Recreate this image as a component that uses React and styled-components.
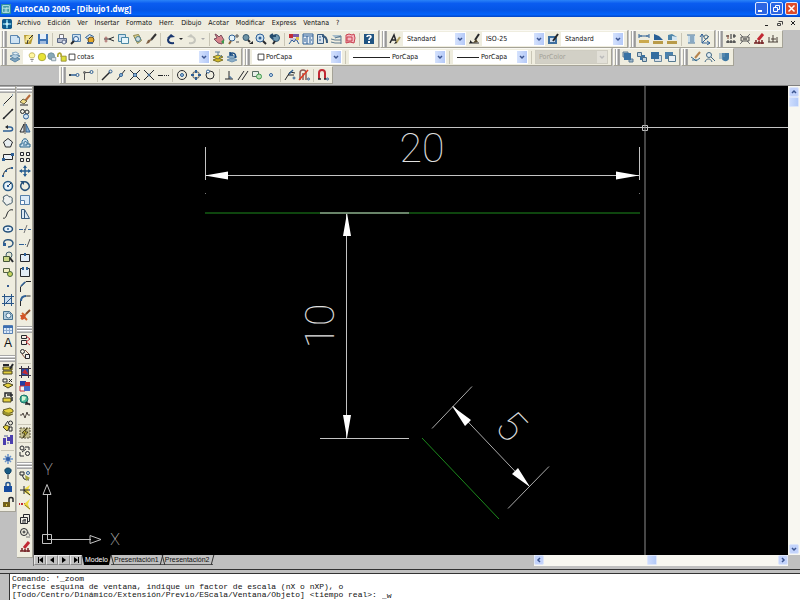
import React, { useState } from 'react';
import styled, { createGlobalStyle, css } from 'styled-components';

const ink = '#26282c';
const blue = '#2f6096';
const pale = '#cfe3f3';
const gold = '#e3cf3c';
const red = '#c22a34';
const green = '#3c9a4c';

// every icon is drawn on a 12 x 12 grid
const icons = {
  app: <><rect width="12" height="12" fill="#2f8f9e" /><path d="M2 2h8v8H2zM2 5h8M5 5v5M7 4v6" stroke="#d6f4f5" /></>,
  menu: <><rect width="12" height="12" rx="2" fill="#10598c" /><path d="M6 1v10M1 6h10" stroke="#7fd4ee" strokeWidth="2" /><path d="M6 4v4M4 6h4" stroke="#fff" /></>,
  newFile: <><path d="M1.5 2.5h7l2 2v6h-9z" fill={pale} stroke="#5b86b0" /><path d="M8.500 2.500v2h2" stroke="#5b86b0" /></>,
  open: <><path d="M1 2h8l1 2-2 7H2z" fill="#b79b34" /><path d="M3 3l5-1 1 3-4 5-3-1z" fill="#f3e493" /><path d="M6 6l4-4M4 11l1-4" stroke={ink} /></>,
  save: <><path d="M1 1h10v10H1z" fill="#3f74b4" /><path d="M3 1h6v5H3z" fill="#e6f0fa" /><path d="M3 8h6v3H3z" fill="#9fbbe0" /></>,
  plot: <><path d="M3.500 1.500h4v4h-4z" fill="#f7f7ff" stroke="#777" /><path d="M1.500 5.500h9v4h-9z" fill="#b6bdce" stroke="#596685" /><circle cx="8" cy="9" r="2" fill="#e5ebf5" stroke="#596685" /></>,
  preview: <><path d="M2.500 1.500h8v7h-8z" fill={pale} stroke="#5b86b0" /><circle cx="6" cy="6" r="2.500" fill="#edf5ff" stroke={blue} /><path d="M4 8l-3 3" stroke={ink} strokeWidth="2" /></>,
  publish: <><path d="M1.500 4.500l4-3 4 2-3 4z" fill={pale} stroke={blue} /><circle cx="7" cy="7" r="3" fill="#e3a92b" stroke="#70521c" /><path d="M3 9h6v2H3z" fill="#4a688e" /></>,
  cut: <><path d="M1 6h5l5-2M6 6l5 2" stroke={ink} /><circle cx="3" cy="5" r="1" stroke="#a66" /><circle cx="3" cy="8" r="1" stroke="#a66" /></>,
  copyClip: <><path d="M1.500 1.500h7v7h-7z" fill={pale} stroke="#4c88a4" /><path d="M4.500 4.500h7v6h-7z" fill="#e7f6fb" stroke="#4c88a4" /></>,
  paste: <><path d="M2.500 2.500l5-1 3 6-4 3z" fill="#e3d48c" stroke="#8b8650" /><circle cx="7" cy="6" r="2.500" fill="#cfe0e6" stroke="#4f7d8a" /></>,
  brush: <><path d="M11 1L6 7" stroke="#333" strokeWidth="2" /><path d="M7 6l-3 4-3 1 2-4z" fill="#816246" /></>,
  undo: <><path d="M9 10C2 11 2 6 5 4" stroke="#18366e" strokeWidth="2" transform="translate(1 0)" /><path d="M3 5l4-4 4 3z" fill="#18366e" /></>,
  redo: <><path d="M3 10c7 1 7-4 4-6" stroke="#c6c6bd" strokeWidth="2" /><path d="M9 5L5 1 1 4z" fill="#c6c6bd" /></>,
  more: <path d="M4 5h4L6 7z" fill={ink} />,
  moreOff: <path d="M4 5h4L6 7z" fill="#aaa" />,
  pan: <><path d="M2 1l2 4-3 1 4 4 4 1 2-4-3-5-2 2-2-2z" fill="#d7848c" stroke="#7b4e5e" /><path d="M8 9l3-3v5z" fill={green} /></>,
  zoomRt: <><circle cx="5" cy="5" r="3" fill="#e4f2f8" stroke={blue} /><path d="M4 8l-2 3" stroke="#8b6638" strokeWidth="2" /><path d="M8 3h4M10 1v4M9 9h3" stroke="#555" /></>,
  zoomWin: <><circle cx="5" cy="4.500" r="3" fill="#6e94a7" stroke="#375a70" /><path d="M7 7l2 2" stroke={ink} strokeWidth="2" /><path d="M8 11h4V8z" fill={ink} /></>,
  zoomAll: <><circle cx="5" cy="5" r="4" fill="#cbe0ee" stroke={blue} /><circle cx="5" cy="5" r="1.500" fill={blue} /><path d="M8 8l3 3" stroke={ink} strokeWidth="2" /></>,
  zoomPrev: <><circle cx="7" cy="5" r="3.500" fill="#6f99b3" stroke="#315a78" /><path d="M1 3h6M1 3l3-2M1 3l3 3" stroke="#244b6d" strokeWidth="2" /><path d="M6 8l-2 3" stroke={ink} strokeWidth="2" /></>,
  props: <><path d="M1 1h4v4H1z" fill={red} /><path d="M5 1h6v3H5z" fill="#7a5aa5" /><path d="M2 5h8v3H2z" fill="#c9c3d8" /><path d="M1 11l3-4 2 2 2-3 3 5" stroke={blue} /><path d="M8 4h3v3H8z" fill="#e0c14b" /></>,
  design: <><path d="M1 1h10v10H1z" fill="#e8f0f8" stroke={blue} /><path d="M1 3h10M5 3v8" stroke={blue} /><path d="M7 5h2M7 7h3M7 9h2M3 5v4" stroke={blue} /></>,
  palette: <><path d="M1.500 1.500h6v9h-6z" fill="#d5e1ec" stroke="#35597c" /><path d="M3 4h2M3 7h2" stroke={blue} /><path d="M6 3c4 0 5 3 5 7" stroke="#35597c" strokeWidth="2" /></>,
  sheets: <><path d="M2 2h9v3H5z" fill="#a5bccb" /><path d="M1 6l4 1h6M1 9l4 1h6M5 5l6-2v8" stroke="#5f7b8e" /></>,
  markup: <><path d="M2 2l3-1 3 1 2-1 1 4-1 5-4-1-4 1z" fill="#f5b9c2" stroke="#c8404f" /><path d="M3 4h5v4H3z" stroke="#c8404f" /></>,
  help: <><path d="M1 1h10v10H1z" fill="#205482" /><path d="M4 4c0-2 4-2 4 0 0 1-2 1-2 3" stroke="#fff" strokeWidth="1.500" /><path d="M5 8h2v2H5z" fill="#fff" /></>,
  textStyle: <><path d="M1 10L5 2l2 6M3 7h4" stroke={ink} strokeWidth="1.500" /><path d="M11 4L7 10" stroke="#b2a05b" strokeWidth="2" /><path d="M7 8l-2 3 3-1z" fill={ink} /></>,
  dimStyle: <><path d="M1 10h10" stroke={ink} /><path d="M2 10v-3l3 3" fill={ink} /><path d="M11 1L7 7" stroke={ink} strokeWidth="2" /><path d="M8 6L5 10l5-1z" fill="#514529" /></>,
  tableStyle: <><path d="M1 3h9v8H1z" fill="#3d6f9f" /><path d="M3 5h5v4H3z" fill="#cfdef0" /><path d="M11 1L6 8" stroke={ink} strokeWidth="2" /></>,
  dist: <><path d="M1 3h10M1 1v4M11 1v4M3 2v2M9 2v2" stroke={blue} /><path d="M1 7h10v3H1z" fill="#cba94d" /></>,
  area: <><path d="M2 7V1l5 2 4 4z" fill="#285f96" /><path d="M1 8h10v3H1z" fill="#b99b49" /></>,
  mass: <><path d="M2 7V2l4-1 5 3v3z" fill="#4f86aa" /><path d="M6 3l5 1v3H6z" fill="#d4e6f1" /><path d="M1 8h10v3H1z" fill="#b99b49" /></>,
  list: <><path d="M3 2h7v8H3z" fill="#c5dbea" /><path d="M2 2h8M5 4h4M5 6h4M5 8h4M3 10h7" stroke="#51799a" /></>,
  locate: <><path d="M3 1v9h8M3 10l7-7" stroke={blue} /><path d="M1 4l2-3 2 3M8 8l3 2-3 2" stroke={blue} /><circle cx="7" cy="4" r="2" stroke="#507083" /></>,
  exA: <><path d="M1 3h3M6 1v5M8 3h3M1 9h10M3 7v3M6 7v3M9 7v3M9 1v4" stroke={ink} /><path d="M3 2v4" stroke="#8a4a38" /></>,
  exB: <><path d="M1 1l10 10M11 1L1 11" stroke="#777" /><path d="M2 4h8v4H2z" fill="#d8d5c8" stroke="#555" /><path d="M4 6h4" stroke={ink} /></>,
  exC: <><path d="M10 1L5 7" stroke={red} strokeWidth="3" /><path d="M1 10h10M3 7v3M6 8v3M9 7v4" stroke="#752426" strokeWidth="1.500" /></>,
  exD: <path d="M1 9h10M2 4v5M6 2v7M10 4v5M4 6h5" stroke="#4a4038" />,
  layers: <><path d="M1 8l5-2 5 2-5 3z" fill="#7da3bf" stroke="#5e87a6" /><path d="M1 5l5-2 5 2-5 3z" fill="#b8d2e2" stroke="#5e87a6" /><path d="M3 2l4-1 3 2-4 1z" fill="#e3eef5" stroke="#89abc2" /></>,
  bulb: <><path d="M6 1c4 0 4 4 2 6H4C2 5 2 1 6 1z" fill="#fff7a0" stroke="#b9a94a" /><path d="M4 9h4M5 11h2" stroke="#777" /></>,
  sun: <circle cx="6" cy="6" r="4.500" fill="#e8e337" stroke="#a5a22e" />,
  vpFreeze: <><circle cx="5" cy="5" r="4" fill="#87a9b8" stroke="#6a8b9c" /><path d="M5.500 6.500h5v4h-5z" fill="#d6e2e8" stroke="#7d929d" /></>,
  unlock: <><path d="M5 5h6v6H5z" fill="#dde03a" stroke="#8d832d" /><path d="M5 6V4C5 0 1 1 1 4v2" stroke="#b0a631" strokeWidth="2" /></>,
  swatch: <path d="M2.500 2.500h7v7h-7z" fill="#fff" stroke="#222" />,
  makeLayer: <><path d="M1 9l5-2 5 2-5 2z" fill="#d5bb28" stroke="#807629" /><path d="M1 6l5-2 5 2-5 2z" fill={gold} stroke="#807629" /><path d="M3 1h5M6 1v4M10 4L7 7" stroke="#5a7e98" /></>,
  layerPrev: <><path d="M1 9l5-2 5 2-5 2zM1 6l5-2 5 2-5 2z" fill="#8baec7" stroke="#7296b3" /><path d="M9 7c2-5-3-6-5-4M4 1v3h3" stroke="#174b82" strokeWidth="1.500" /></>,
  front: <><path d="M1 1h5v5H1zM7 8h4v3H7z" fill="#9eb6c7" stroke="#5a7b94" /><rect x="2" y="2" width="7" height="7" fill="#3972a4" /></>,
  back: <><rect x="4" y="4" width="5" height="5" fill="#3972a4" /><path d="M1.500 1.500h4v4h-4zM6.500 6.500h4v4h-4z" fill="#c1d2de" stroke="#4a6d88" /></>,
  above: <><path d="M4.500 4.500h7v6h-7z" fill="#d6dfe7" stroke="#68869c" /><rect x="1" y="1" width="8" height="7" fill="#356d9f" /></>,
  below: <><rect x="1" y="1" width="8" height="7" fill="#4b81ad" /><path d="M4.500 4.500h7v6h-7z" fill="#e9eff5" stroke="#55798f" /></>,
  refEdit: <><path d="M10 1L5 7" stroke="#b5834d" strokeWidth="2" /><path d="M1 6l3 2 2 2 4-3M2 9h5" stroke="#366b90" /></>,
  refUser: <><circle cx="5" cy="4" r="2.500" fill="#e2edf3" stroke="#426782" /><path d="M1 11c1-4 6-4 7 0M7 6l4 4" stroke="#426782" /></>,
  refSave: <><path d="M4 2h7v5c0 4-6 4-7 1z" fill="#3f78a4" /><path d="M1 3h6M1 5h6M1 7h4" stroke="#6a97b7" /></>,
  track: <><path d="M1 6h7" stroke={blue} strokeWidth="1.500" /><circle cx="2" cy="6" r="1" fill={ink} /><circle cx="9.500" cy="6" r="1.500" stroke={blue} /></>,
  from: <><path d="M2.500 11V3.500H8" stroke="#555" /><circle cx="2.500" cy="3.500" r="1" stroke="#555" /><circle cx="9.500" cy="3" r="1.500" stroke={blue} /></>,
  endpoint: <><path d="M1 11l8-8" stroke={ink} strokeWidth="1.500" /><circle cx="9.500" cy="2.500" r="1.500" stroke={blue} /></>,
  midpoint: <><path d="M2 11l8-10" stroke={ink} /><circle cx="6" cy="6" r="1.500" fill="#9fc4e2" stroke={blue} /></>,
  intersect: <><path d="M1 1l10 10M11 1L1 11" stroke={ink} /><circle cx="6" cy="6" r="1.500" fill="#9fc4e2" stroke={blue} /></>,
  apparent: <><path d="M1 1l10 10M11 1L7 5M5 7l-4 4" stroke={ink} /><circle cx="6" cy="6" r="1" stroke={blue} /></>,
  extension: <path d="M1 6.500h5M7 6.500h1M9 6.500h1M11 6.500h1" stroke={ink} />,
  center: <><circle cx="6" cy="6" r="4.500" stroke={ink} /><circle cx="6" cy="6" r="1.500" fill="#9fc4e2" stroke={blue} /></>,
  quadrant: <><circle cx="6" cy="6" r="3.500" stroke="#555" /><path d="M6 1v3M6 8v3M1 6h3M8 6h3" stroke={blue} strokeWidth="2" /></>,
  tangent: <><circle cx="6" cy="6" r="4" stroke={ink} /><circle cx="4" cy="2.500" r="1.500" fill="#fff" stroke={blue} /></>,
  perp: <><path d="M6 2v8M2 10h8" stroke={ink} /><path d="M6 8h2v2" stroke={blue} /></>,
  parallel: <path d="M1 11l6-9M5 11l6-9" stroke={ink} />,
  insertion: <><path d="M1.500 2.500h6v5h-6z" fill="#e7efe7" stroke="#596d63" /><circle cx="8" cy="7.500" r="2.500" fill="#bfe0b8" stroke={green} /></>,
  node: <circle cx="6" cy="6" r="1.500" fill="#d8edfb" stroke={blue} />,
  nearest: <><path d="M1 11L6 3l5 1M4 6h6" stroke={ink} /><path d="M5 5l4-4" stroke={blue} strokeWidth="1.500" /><circle cx="10" cy="9" r="1" stroke={blue} /></>,
  noSnap: <><path d="M2 11V4c0-4 6-4 6 0v7M5 11V4" stroke="#8c5d58" strokeWidth="1.500" /><path d="M1 11L10 1" stroke="#e13922" strokeWidth="1.500" /><circle cx="10.500" cy="10" r="1" stroke={blue} /></>,
  magnet: <><path d="M2 10V4c0-4 6-4 6 0v6" stroke={red} strokeWidth="2" /><path d="M1 10h3M7 10h2" stroke={ink} strokeWidth="1.500" /><circle cx="10.500" cy="10" r="1" stroke={blue} /></>,
  line: <><path d="M2 10l8-8" stroke={ink} /><path d="M1 11h1M10 1h1" stroke={blue} /></>,
  xline: <><path d="M1 11L11 1" stroke={ink} strokeWidth="1.500" /><path d="M1 9v2h2zM9 1h2v2z" fill={ink} /></>,
  pline: <><path d="M1 9h7c4 0 3-4 0-4H5" stroke={blue} strokeWidth="1.500" /><path d="M3 5l3-2v4z" fill={ink} /></>,
  polygon: <path d="M6 1.500l4.500 3.500-2 5h-5l-2-5z" fill="#e7edf0" stroke={ink} />,
  rect: <><path d="M1.500 3.500h9v5h-9z" fill="#eaf0f5" stroke={ink} /><path d="M0 7h3v3H0zM9 2h3v3H9z" fill={blue} /></>,
  arc: <><path d="M1 11c1-5 4-8 9-8" stroke={ink} /><path d="M0 10h2v2H0zM9 2h2v2H9zM3 5h2v2H3z" fill={blue} /></>,
  circle: <><circle cx="6" cy="6" r="4.500" fill="#e8f2f8" stroke="#285b86" strokeWidth="1.500" /><path d="M6 6l3-3" stroke={ink} /><path d="M5 5h2v2H5z" fill={blue} /></>,
  cloud: <path d="M3 2c2-2 4 0 4 1 2-1 4 1 3 3 1 3-1 4-3 4-2 2-4 1-4-1-3-1-2-3-1-4-1-1-1-3 1-3z" fill="#edf0ee" stroke="#334c5c" />,
  spline: <path d="M1 10c2 1 3-1 4-4s3-5 6-4" stroke={ink} />,
  ellipse: <><ellipse cx="6" cy="6" rx="4.500" ry="3" fill="#e6f2fb" stroke="#244f78" strokeWidth="1.500" /><circle cx="6" cy="6" r="1" fill={blue} /></>,
  ellipseArc: <><path d="M2 7C0 2 10 1 11 6c0 3-3 4-5 4" stroke="#315a80" strokeWidth="1.500" /><path d="M1 6h3v3H1z" fill={blue} /></>,
  insert: <><circle cx="7" cy="4" r="3" fill="#e3e6d2" stroke="#3e5c6c" /><path d="M1.500 5.500h6v5h-6z" fill="#cbd685" stroke="#445737" /><path d="M8 7l3 4" stroke={ink} strokeWidth="2" /></>,
  block: <><path d="M1.500 2.500h6v4h-6z" fill="#f0edbd" stroke="#515f42" /><circle cx="8" cy="8" r="2.500" fill="#c8d35d" stroke="#45663e" /></>,
  point: <rect x="5" y="5" width="2" height="2" fill="#365b90" />,
  hatch: <><path d="M2.500 2.500h7v7h-7z" fill="#c9dced" stroke={blue} /><path d="M4 9l5-5M0 2.500h12M0 9.500h12M2.500 0v12M9.500 0v12" stroke="#2a5687" /></>,
  region: <><path d="M1.500 2.500h6l3 3v5h-9z" fill="#b6cfdf" stroke="#46718f" /><circle cx="6.500" cy="6.500" r="2.500" fill="#edf4f8" stroke="#46718f" /></>,
  table: <><path d="M1.500 2.500h9v8h-9z" fill="#dbe9f8" stroke="#567eb1" /><path d="M1 3h10v2H1z" fill="#3d6fb0" /><path d="M4.500 5v5M7.500 5v5M2 7.500h8" stroke="#8dacd0" /></>,
  erase: <><path d="M11 1L6 7" stroke="#b66a3b" strokeWidth="2" /><path d="M1 8l3-3 4 2-3 3z" fill="#efdc87" stroke="#6e6444" /><path d="M1 11h8" stroke={ink} /></>,
  copy: <><circle cx="3.500" cy="3.500" r="2" stroke={ink} /><circle cx="8" cy="4" r="2" stroke={ink} /><circle cx="7" cy="8.500" r="2.500" fill="#d3e4f1" stroke={blue} /></>,
  mirror: <><path d="M5 2v8H1z" fill="#e7eaec" stroke={ink} /><path d="M7 2v8h4z" fill="#86aed0" stroke={blue} /><path d="M6 0v12" stroke="#555" /></>,
  offset: <><path d="M1 10h10V7H9c1-7-7-7-6 0H1z" fill="#c8deec" stroke="#27628b" /><path d="M4 8h4c1-5-4-4-3-1" stroke="#27628b" /></>,
  array: <path d="M1.500 1.500h3v3h-3zM7.500 1.500h3v3h-3zM1.500 7.500h3v3h-3zM7.500 7.500h3v3h-3z" fill="#f4f4ef" stroke={ink} />,
  move: <><path d="M6 1v10M1 6h10" stroke="#285d90" strokeWidth="1.500" /><path d="M6 0l2 3H4zM6 12l2-3H4zM0 6l3-2v4zM12 6L9 4v4z" fill="#285d90" /></>,
  rotate: <><path d="M3 3c4-4 10 3 6 6-4 4-10-2-6-6" stroke="#244f78" strokeWidth="1.500" /><path d="M1 1h4v4z" fill="#244f78" /></>,
  scale: <><path d="M1.500 1.500h9v9h-9z" fill="#dcebf7" stroke="#557fa9" /><path d="M1.500 6.500h4v4h-4z" fill="#fff" stroke="#557fa9" /></>,
  stretch: <><path d="M2.500 1.500h3l5 9h-8z" fill="#dce9f1" stroke="#34597c" /><path d="M5.500 2v8" stroke="#34597c" /></>,
  trim: <><path d="M0 6.500h4M5 6.500h2M9 6.500h3" stroke={blue} /><path d="M8 2L5 10" stroke="#777" /></>,
  extend: <><path d="M0 7.500h5M6 7.500h1" stroke={blue} /><path d="M11 2L8 10" stroke="#555" /></>,
  breakAt: <><path d="M1.500 3.500h9v7h-9z" fill="#e3edf5" stroke={ink} /><path d="M5 2h2v3H5z" fill={blue} /></>,
  break: <><path d="M4 2.500H1.500v8h9v-8H8" fill="#e3edf5" stroke={ink} /><path d="M3 1h2v3H3zM7 1h2v3H7z" fill={blue} /></>,
  chamfer: <><path d="M1.500 12V7L7 1.500h5" stroke={ink} /><path d="M2 6l4-4" stroke={blue} strokeWidth="1.500" /></>,
  fillet: <><path d="M1.500 12V8c0-4 3-6 6-6h4" stroke={ink} /><path d="M2 7c0-3 2-5 5-5" stroke={blue} strokeWidth="2" /></>,
  explode: <><path d="M2 10l5-5M3 4l2 2M6 9l2 2" stroke="#d3622b" strokeWidth="2" /><path d="M11 1L7 5" stroke="#8b4a23" strokeWidth="2" /><path d="M1 6l5 0 1 3-4 2z" fill="#d2542a" /></>,
  insertRef: <><path d="M2.500 1.500h5v3h-5zM2.500 6.500h5v4h-5z" fill="#f4eee4" stroke={ink} /><path d="M7 2l4 3-4 3 4 3" stroke={red} /></>,
  attach: <><circle cx="3.500" cy="3.500" r="2" stroke={ink} /><path d="M6 2l5 5M3 6l4 5" stroke="#7b4a3a" /><path d="M6.500 6.500h4v4h-4z" fill="#eee" stroke={ink} /></>,
  image: <><rect x="2" y="2" width="8" height="8" fill="#284aa5" /><path d="M3 7l3-4 4 6z" fill={red} /><path d="M0 2.500h12M0 9.500h12M2.500 0v12M9.500 0v12" stroke="#3b3346" /></>,
  imageAdj: <><path d="M1 1h6v5H1z" fill="#263ea4" /><path d="M6 2h5v4H6z" fill={red} /><path d="M1 6h5v5H1z" fill="#f4f4f4" stroke={red} /><path d="M5 6h6v5H5z" fill="#4268c9" /></>,
  globe: <><circle cx="5" cy="5" r="4" fill="#49b596" stroke="#186f69" /><path d="M3 2l4 1-1 3-3 1z" fill="#d6f4d4" /><path d="M7 8l4 3M6 10h5" stroke={ink} strokeWidth="1.500" /></>,
  wave: <path d="M1 6h2l1-2 2 5 2-6 1 3h2" stroke="#4d453f" />,
  flash: <><path d="M1 1h10v10H1z" fill="#c4bf8f" stroke="#5a5540" strokeDasharray="2 1" /><path d="M8 1L3 6h3l-2 5 5-6H6z" fill="#f0dc3b" stroke="#46401e" /></>,
  chain: <><circle cx="3" cy="3" r="2" stroke={ink} /><circle cx="8.500" cy="8.500" r="2" stroke={ink} /><path d="M6 2h4v3M1 7v4h4M3 7l4-3" stroke={ink} /></>,
  layA: <><path d="M1 4h9v3H1zM1 8h9v3H1z" fill={gold} stroke="#47431f" /><path d="M1 2h6M8 6l3-5" stroke={ink} strokeWidth="2" /></>,
  layB: <><path d="M1 8l5-2 5 2-5 3z" fill={gold} stroke="#47431f" /><path d="M1 2h4v3H1zM7 2l3 3M10 2L7 5" stroke={ink} /></>,
  layC: <><path d="M1 7h8v4H1z" fill={gold} stroke="#47431f" /><path d="M3 6V2h6v4M5 4h6M10 6v4" stroke={ink} strokeWidth="1.500" /></>,
  layD: <><path d="M1 4l7-2 3 2v2L5 8z" fill={gold} stroke="#655d24" /><path d="M1 5v3l5 2 5-2" fill="#9b942e" stroke="#655d24" /></>,
  layE: <><path d="M1 7l3-2 4 2-3 4z" fill={gold} stroke="#47431f" /><circle cx="8.500" cy="3" r="2" stroke={ink} /><path d="M3 5l3-4M7 7h3v4H7z" stroke={ink} /></>,
  layF: <><path d="M1 4h3v7H1zM5 3h3v4H5zM8 1h3v9H8z" fill="#4b3fae" /><path d="M2 2h4M5 9h2" stroke="#9ba2bb" strokeWidth="2" /></>,
  freeze: <><path d="M6 1v10M1 6h10M3 3l6 6M9 3L3 9" stroke="#6a93c8" strokeWidth="1.500" /><circle cx="6" cy="6" r="2" fill="#315ea6" /></>,
  bulbOff: <><path d="M6 1c4 0 4 4 1 6H5C2 5 2 1 6 1z" fill="#175b83" stroke="#0d3e63" /><path d="M5 9h2M5 11h2" stroke={ink} /></>,
  lock: <><path d="M2 5h8v6H2z" fill="#174c9e" /><path d="M4 5V3c0-2 4-2 4 0v2" stroke="#23548f" strokeWidth="1.500" /></>,
  lockOpen: <><path d="M1 6h7v5H1z" fill="#72601d" /><path d="M7 6V3c0-2 4-2 4 0v3" stroke={ink} strokeWidth="1.500" /><path d="M4 8h1v2H4z" fill={gold} /></>,
  toolA: <><path d="M1 2h4v3H1zM3 5l2 4 5 1" stroke={ink} /><path d="M6 5l5 3-4 3z" fill="#a3a13a" /><circle cx="9" cy="3" r="1.500" stroke={blue} /></>,
  toolB: <><path d="M5 5l6-4-2 5 3 6-7-4z" fill="#f0db40" /><path d="M1 6h10M5 6l6 5M5 2v8" stroke={ink} /></>,
  toolC: <><path d="M0 6h1M2 6h2M5 6h1" stroke={red} strokeWidth="2" /><path d="M5 6l6-5-2 5 2 6-6-5z" fill="#f0db40" /><path d="M6 7l5 4" stroke="#8b7a2c" /></>,
  toolD: <><path d="M1.500 4.500h7v6h-7zM4.500 4V1.500h6v7H9" fill="#efeee5" stroke={ink} /><path d="M4 7v4M6 6v4M4 7h3" stroke={ink} /></>,
  toolE: <><circle cx="5" cy="5" r="3.500" stroke={ink} /><circle cx="5" cy="5" r="1" stroke={ink} /><path d="M8 3l3 6M7 10h4" stroke="#777" /></>,
};

const Icon = ({ name, size = 12 }) => (
  <svg width={size} height={size} viewBox="0 0 12 12" fill="none" aria-hidden="true">
    {icons[name]}
  </svg>
);

const GlobalStyle = createGlobalStyle`
  * {
    box-sizing: border-box;
  }
  body {
    margin: 0;
    overflow: hidden;
    background: #c0c0c0;
    font-family: 'DejaVu Sans Condensed', 'Liberation Sans', sans-serif;
    font-size: 7px;
    color: #111;
  }
  button, select, input {
    font: inherit;
    color: inherit;
    margin: 0;
    padding: 0;
    border: 0;
    border-radius: 0;
    background: none;
  }
  svg {
    display: block;
    flex: none;
  }
`;

const Shell = styled.div`
  display: flex;
  flex-direction: column;
  height: 100vh;
`;

const TitleBar = styled.header`
  display: flex;
  align-items: center;
  gap: 3px;
  height: 17px;
  padding: 0 2px 0 1px;
  background: linear-gradient(#2a83f8 0, #0a5cf0 20%, #0455e6 60%, #0362fa 85%, #0345c4 100%);
`;

const Title = styled.h1`
  flex: 1;
  margin: 0;
  font-family: 'Open Sans', 'Noto Sans', sans-serif;
  font-size: 8px;
  font-weight: 700;
  color: #fff;
`;

const WindowButton = styled.button`
  display: flex;
  align-items: center;
  justify-content: center;
  width: 13px;
  height: 13px;
  margin-left: -1px;
  border: 1px solid #dfe9ff;
  border-radius: 2px;
  background: ${({ $close }) => ($close ? '#dd4c2a' : '#2c65e2')};
`;

const MenuBar = styled.nav`
  display: flex;
  align-items: center;
  gap: 7px;
  height: 13px;
  padding: 0 4px 0 2px;
  background: #efecdf;

  > svg {
    margin-right: -2px;
  }
`;

const MenuItem = styled.button`
  line-height: 11px;
`;

const Spacer = styled.div`
  flex: ${({ $grow = 1 }) => $grow};
`;

const Dock = styled.div`
  padding-bottom: 1px;
  background: #c0c0c0;
  border-bottom: 1px solid #808080;
`;

const DockRow = styled.div`
  display: flex;
  gap: 1px;
  height: 18px;
  padding-left: ${({ $indent }) => ($indent ? '59px' : '0')};
`;

const Bar = styled.div`
  display: flex;
  align-items: center;
  padding: 0 2px 0 1px;
  background: #efeddf;
  border: 1px solid;
  border-color: #faf9f4 #a5a397 #a5a397 #faf9f4;
`;

const Grip = styled.div`
  flex: none;
  ${({ $flat }) => $flat ? css`
    height: 7px;
    margin-top: 4px;
    border: solid #a8a8a8;
    border-width: 1px 0;
    background: linear-gradient(#fff 0 1px, #c8c8c8 1px 2px, #999 2px 3px, #fff 3px 4px, #c8c8c8 4px);

    &:first-child {
      margin-top: 0;
    }
  ` : css`
    width: 5px;
    height: 16px;
    margin-right: 1px;
    border: solid #a8a8a8;
    border-width: 0 1px;
    background: linear-gradient(90deg, #fff 0 1px, #c8c8c8 1px 2px, #999 2px 3px);
  `}
`;

const Divider = styled.div`
  flex: none;
  ${({ $flat }) => $flat ? css`
    height: 1px;
    margin: 2px 1px 1px;
  ` : css`
    width: 1px;
    height: 13px;
    margin: 0 2px;
  `}
  background: #c9c6b6;
`;

const Tool = styled.button`
  display: flex;
  flex: none;
  align-items: center;
  justify-content: center;
  width: ${({ $narrow }) => ($narrow ? '8px' : '14px')};
  height: 14px;
`;

const Combo = styled.label`
  position: relative;
  display: flex;
  align-items: center;
  width: ${({ $w }) => $w}px;
  height: 14px;
  padding-left: 3px;
  margin: 0 1px;
  border: 1px solid ${({ $off }) => ($off ? '#cfcdc2' : '#fff')};
  background: ${({ $off }) => ($off ? '#d2d0c6' : '#fff')};
  color: ${({ $off }) => ($off ? '#a2a096' : '#111')};

  select {
    flex: 1;
    min-width: 0;
    height: 12px;
    padding-right: 10px;
    appearance: none;
    opacity: 1;
  }
`;

const ComboArrow = styled.span`
  position: absolute;
  right: 0;
  top: 0;
  display: flex;
  align-items: center;
  justify-content: center;
  width: 10px;
  height: 12px;
  pointer-events: none;
  background: ${({ $off }) => ($off ? '#e2e0d8' : 'linear-gradient(90deg, #d5e2fd, #b4c9f8)')};
`;

const Sample = styled.span`
  width: ${({ $w }) => $w}px;
  height: 1px;
  margin-right: 2px;
  background: #222;
`;

const Work = styled.main`
  display: flex;
  flex: 1;
  min-height: 0;
`;

const Palettes = styled.div`
  display: flex;
  align-items: flex-start;
  gap: 1px;
  width: 33px;
`;

const Palette = styled.div`
  display: flex;
  flex-direction: column;
  flex: 1;
  padding-bottom: 2px;
  background: #efeddf;
  border-right: 1px solid #a5a397;
  border-bottom: 1px solid #a5a397;
`;

const Group = styled.div`
  display: flex;
  flex-direction: column;
  align-items: center;

  /* icons sit on a pitch of 43px for every three */
  ${Tool}:nth-child(3n) {
    margin-bottom: 1px;
  }
`;

const View = styled.section`
  display: flex;
  flex: 1;
  flex-direction: column;
  min-width: 0;
  border-left: 1px solid #777;
`;

const ViewTop = styled.div`
  display: flex;
  flex: 1;
  min-height: 0;
`;

const Canvas = styled.div`
  flex: 1;
  min-width: 0;
  overflow: hidden;
  background: #000;

  svg {
    width: 100%;
    height: 100%;
  }
`;

const ScrollBar = styled.div`
  display: flex;
  flex-direction: ${({ $vertical }) => ($vertical ? 'column' : 'row')};
  ${({ $vertical }) => ($vertical ? 'width: 12px; padding: 1px;' : 'width: 254px; height: 11px;')}
  flex: none;
  background: #f8f7f1;
`;

const ScrollButton = styled.button`
  display: flex;
  align-items: center;
  justify-content: center;
  width: 10px;
  height: 10px;
  border: 1px solid #dde6fb;
  border-radius: 2px;
  background: #c3d3fb;
`;

const Thumb = styled.div`
  width: 10px;
  height: 10px;
  border: 1px solid #dde6fb;
  border-radius: 1px;
  background: linear-gradient(90deg, #cddcfd, #b3caf8);
`;

const TabStrip = styled.div`
  display: flex;
  justify-content: space-between;
  height: 11px;
  padding-right: 12px;
  background: #c0c0c0;
`;

const Tabs = styled.div`
  display: flex;
  height: 10px;
`;

const NavButton = styled.button`
  display: flex;
  align-items: center;
  justify-content: center;
  width: 12px;
  height: 10px;
  border: 1px solid;
  border-color: #e8e8e8 #888 #888 #e8e8e8;
`;

const Tab = styled.button`
  position: relative;
  padding: 0 3px;
  font-family: 'Liberation Sans', sans-serif;
  line-height: 10px;
  ${({ $active }) => $active ? css`
    color: #fff;
    background: #000;
    clip-path: polygon(0 0, 100% 0, calc(100% - 2px) 100%, 2px 100%);
  ` : css`
    box-shadow: inset 0 -1px #555;

    &::before, &::after {
      content: '';
      position: absolute;
      top: 0;
      bottom: 0;
      left: 1px;
      border-left: 1px solid #333;
      transform: skewX(15deg);
    }
    &::after {
      left: auto;
      right: 0;
      transform: skewX(-15deg);
    }
  `}
`;

const Gutter = styled.div`
  height: 5px;
  margin-top: 3px;
  border: solid #333;
  border-width: 1px 0;
  background: #c0c0c0;
`;

const CommandArea = styled.section`
  display: flex;
  height: 26px;
  background: #c0c0c0;
`;

const CommandText = styled.div`
  flex: 1;
  margin-left: 9px;
  padding: 1px 0 0 2px;
  border-left: 1px solid #333;
  background: #fff;
  font-family: 'Liberation Mono', monospace;
  font-size: 8px;
  line-height: 8px;
  white-space: pre;
`;

const Prompt = styled.div`
  display: flex;
  gap: 5px;

  input {
    flex: 1;
    height: 8px;
    outline: none;
  }
`;

const Chevron = ({ turn = 0, color = '#3c5590', size = 6 }) => (
  <svg width={size} height={size} viewBox="0 0 6 6" fill="none" aria-hidden="true">
    <path d="M1 2l2 2 2-2" stroke={color} strokeWidth="1.5" transform={`rotate(${turn} 3 3)`} />
  </svg>
);

const Tools = ({ names, flat }) => names.split(' ').map((name, i) =>
  name === '|'
    ? <Divider key={i} $flat={flat} />
    : (
      <Tool key={i} aria-label={name} $narrow={name.startsWith('more')}>
        <Icon name={name} />
      </Tool>
    )
);

const Select = ({ label, value, w, off, children }) => (
  <Combo $w={w} $off={off}>
    {children}
    <select aria-label={label} disabled={off} defaultValue={value}>
      <option>{value}</option>
    </select>
    <ComboArrow $off={off}><Chevron color={off ? '#bbb' : undefined} /></ComboArrow>
  </Combo>
);

const menus = ['Archivo', 'Edición', 'Ver', 'Insertar', 'Formato', 'Herr.', 'Dibujo', 'Acotar', 'Modificar', 'Express', 'Ventana', '?'];

// the model view, moved so that its first visible point is the corner
const Drawing = () => (
  <svg fill="none" stroke="#c4c4c4">
    <g transform="translate(-34 -86)">
      {/* entities */}
      <path d="M205 213H640M422 438l77 81" stroke="#1c8a1c" />
      {/* horizontal dimension */}
      <path d="M205.500 147v33M639.500 147v33M206 175.500h433M320 213h89" />
      <path d="M205.500 193v1M639.500 193v1" stroke="#777" />
      <path d="M205 175.500l23-4v8zM639 175.500l-23-4v8z" fill="#fff" stroke="none" />
      {/* vertical dimension */}
      <path d="M346.500 214v224M320 438.500h89" />
      <path d="M347 213l-4 23h8zM347 438l-4-23h8z" fill="#fff" stroke="none" />
      {/* aligned dimension */}
      <path d="M472 386.500l-40 42M549 466.500l-41 42M453 406l76 80" stroke="#aaa" />
      <path d="M452 406l19 14-6 6zM530 487l-12-19-6 6z" fill="#fff" stroke="none" />
      <g fill="#e0e0e0" stroke="none" fontFamily="Roboto, sans-serif" fontWeight="100" fontSize="41" textAnchor="middle">
        <text x="422" y="162">20</text>
        <text transform="translate(334 326) rotate(-90)">10</text>
        <text transform="translate(501 436) rotate(46)">5</text>
      </g>
      {/* axes */}
      <path d="M42.500 534.500h9v9h-9zM47.500 539V495M47 539.500h44M47 484.500l-4 10h8zM101 539.500l-11-4v8z" />
      <g fill="#e0e0e0" stroke="none" fontFamily="Roboto, sans-serif" fontWeight="100" fontSize="16" textAnchor="middle">
        <text x="48" y="475">Y</text>
        <text x="115" y="545">X</text>
      </g>
      {/* cursor */}
      <path d="M-2000 127.500H4000M642.500 125.500h5v5h-5z" />
      <path d="M645 -2000V4000" stroke="#8c8c8c" />
    </g>
  </svg>
);

function App() {
  const [tab, setTab] = useState('Modelo');
  const [command, setCommand] = useState('_w');

  return (
    <Shell>
      <GlobalStyle />
      <TitleBar>
        <Icon name="app" size={10} />
        <Title>AutoCAD 2005 - [Dibujo1.dwg]</Title>
        <WindowButton aria-label="Minimizar">
          <svg width="9" height="9" viewBox="0 0 9 9"><path d="M1 6h4v2H1z" fill="#fff" /></svg>
        </WindowButton>
        <WindowButton aria-label="Restaurar">
          <svg width="9" height="9" viewBox="0 0 9 9" fill="none" stroke="#fff"><path d="M3.500 3V1.500h4v4H6M1.500 3.500h4v4h-4z" /></svg>
        </WindowButton>
        <WindowButton aria-label="Cerrar" $close>
          <svg width="9" height="9" viewBox="0 0 9 9" stroke="#fff" strokeWidth="1.500"><path d="M1.500 1.500l6 6M7.500 1.500l-6 6" /></svg>
        </WindowButton>
      </TitleBar>

      <MenuBar>
        <Icon name="menu" size={10} />
        {menus.map(menu => <MenuItem key={menu}>{menu}</MenuItem>)}
        <Spacer />
        <MenuItem aria-label="Minimizar dibujo">
          <svg width="6" height="7" viewBox="0 0 6 7"><path d="M1 5h3v1H1z" fill="#222" /></svg>
        </MenuItem>
        <MenuItem aria-label="Restaurar dibujo">
          <svg width="6" height="7" viewBox="0 0 6 7" fill="none" stroke="#444"><path d="M1.500 1.500h4v3M.5 3.500h3v2h-3z" /></svg>
        </MenuItem>
        <MenuItem aria-label="Cerrar dibujo">
          <svg width="6" height="7" viewBox="0 0 6 7" stroke="#222"><path d="M1 1l4 4M5 1L1 5" /></svg>
        </MenuItem>
      </MenuBar>

      <Dock>
        <DockRow>
          <Bar>
            <Grip />
            <Tools names="newFile open save | plot preview publish | cut copyClip paste brush | undo more redo moreOff | pan zoomRt zoomWin zoomAll zoomPrev | props design palette sheets markup | help" />
          </Bar>
          <Bar>
            <Grip />
            <Tools names="textStyle" />
            <Select label="Estilo de texto" value="Standard" w={63} />
            <Tools names="dimStyle" />
            <Select label="Estilo de cota" value="ISO-25" w={63} />
            <Tools names="tableStyle" />
            <Select label="Estilo de tabla" value="Standard" w={63} />
          </Bar>
          <Bar>
            <Grip />
            <Tools names="dist area mass | list locate" />
          </Bar>
          <Bar>
            <Grip />
            <Tools names="exA exB exC exD" />
          </Bar>
        </DockRow>
        <DockRow>
          <Bar>
            <Grip />
            <Tools names="layers" />
            <Select label="Capa" value="cotas" w={187}>
              <Icon name="bulb" size={10} />
              <Icon name="sun" size={10} />
              <Icon name="vpFreeze" size={10} />
              <Icon name="unlock" size={10} />
              <Icon name="swatch" size={10} />
            </Select>
            <Tools names="makeLayer layerPrev" />
          </Bar>
          <Bar>
            <Grip />
            <Select label="Color" value="PorCapa" w={90}>
              <Icon name="swatch" size={10} />
            </Select>
            <Divider />
            <Select label="Tipo de línea" value="PorCapa" w={97}><Sample $w={37} /></Select>
            <Divider />
            <Select label="Grosor de línea" value="PorCapa" w={75}><Sample $w={22} /></Select>
            <Divider />
            <Select label="Estilo de trazado" value="PorColor" w={73} off />
          </Bar>
          <Bar>
            <Grip />
            <Tools names="front back above below" />
          </Bar>
          <Bar>
            <Grip />
            <Tools names="refEdit refUser refSave" />
          </Bar>
        </DockRow>
        <DockRow $indent>
          <Bar>
            <Grip />
            <Tools names="track from | endpoint midpoint intersect apparent extension | center quadrant tangent | perp parallel insertion node | nearest noSnap | magnet" />
          </Bar>
        </DockRow>
      </Dock>

      <Work>
        <Palettes>
          <Palette>
            <Grip $flat />
            <Group>
              <Tools names="line xline pline polygon rect arc circle cloud spline ellipse ellipseArc insert block point hatch region table" />
              <Tool aria-label="texto">
                <svg width="12" height="12" viewBox="0 0 12 12">
                  <text x="6" y="10" textAnchor="middle" fontFamily="Liberation Sans, sans-serif" fontSize="12" fill="#111">A</text>
                </svg>
              </Tool>
            </Group>
            <Grip $flat />
            <Group><Tools names="layA layB layC layD layE layF" /></Group>
            <Divider $flat />
            <Group><Tools names="freeze bulbOff lock lockOpen" /></Group>
          </Palette>
          <Palette>
            <Grip $flat />
            <Group><Tools names="erase copy mirror offset array move rotate scale stretch trim extend breakAt break chamfer fillet explode" /></Group>
            <Grip $flat />
            <Group><Tools names="insertRef attach" /></Group>
            <Divider $flat />
            <Group><Tools names="image imageAdj globe wave" /></Group>
            <Divider $flat />
            <Group><Tools names="flash" /></Group>
            <Divider $flat />
            <Group><Tools names="chain" /></Group>
            <Grip $flat />
            <Group><Tools names="toolA toolB toolC toolD toolE exC" /></Group>
          </Palette>
        </Palettes>

        <View>
          <ViewTop>
            <Canvas><Drawing /></Canvas>
            <ScrollBar $vertical>
              <ScrollButton aria-label="Arriba"><Chevron turn={180} /></ScrollButton>
              <Thumb />
              <Spacer />
              <ScrollButton aria-label="Abajo"><Chevron /></ScrollButton>
            </ScrollBar>
          </ViewTop>
          <TabStrip>
            <Tabs>
              <NavButton aria-label="Primera"><svg width="7" height="6" viewBox="0 0 7 6"><path d="M1 0h1v6H1zM6 0v6L2 3z" /></svg></NavButton>
              <NavButton aria-label="Anterior"><svg width="6" height="6" viewBox="0 0 6 6"><path d="M5 0v6L1 3z" /></svg></NavButton>
              <NavButton aria-label="Siguiente"><svg width="6" height="6" viewBox="0 0 6 6"><path d="M1 0v6l4-3z" /></svg></NavButton>
              <NavButton aria-label="Última"><svg width="7" height="6" viewBox="0 0 7 6"><path d="M5 0h1v6H5zM1 0v6l4-3z" /></svg></NavButton>
              {['Modelo', 'Presentación1', 'Presentación2'].map(name => (
                <Tab key={name} $active={tab === name} onClick={() => setTab(name)}>{name}</Tab>
              ))}
            </Tabs>
            <ScrollBar>
              <ScrollButton aria-label="Izquierda"><Chevron turn={90} /></ScrollButton>
              <Spacer $grow={6} />
              <Thumb />
              <Spacer $grow={7} />
              <ScrollButton aria-label="Derecha"><Chevron turn={-90} /></ScrollButton>
            </ScrollBar>
          </TabStrip>
        </View>
      </Work>

      <Gutter />
      <CommandArea>
        <CommandText>
          <div>Comando: '_zoom</div>
          <div>Precise esquina de ventana, indique un factor de escala (nX o nXP), o</div>
          <Prompt>
            <label htmlFor="command">[Todo/Centro/Dinámico/Extensión/Previo/EScala/Ventana/Objeto] &lt;tiempo real&gt;:</label>
            <input id="command" value={command} onChange={e => setCommand(e.target.value)} />
          </Prompt>
        </CommandText>
      </CommandArea>
    </Shell>
  );
}

export default App;
